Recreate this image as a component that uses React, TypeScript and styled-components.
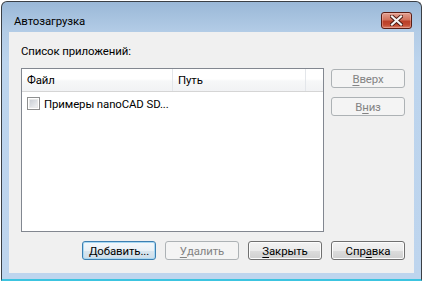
import React from 'react';
import styled, { createGlobalStyle } from 'styled-components';

const GlobalStyle = createGlobalStyle`
  html, body {
    margin: 0;
    padding: 0;
    background: #ffffff;
  }
  body {
    font-family: Roboto, "Noto Sans", sans-serif;
    font-size: 11.4px;
    letter-spacing: -0.1px;
    color: #000;
  }
`;

const Window = styled.div`
  box-sizing: border-box;
  width: 421px;
  height: 280px;
  margin: 1px 0 0 1px;
  border: 1px solid #3a3f45;
  border-bottom: 2px solid #3cc4e0;
  border-radius: 6px 6px 0 0;
  background: linear-gradient(to bottom, #9ab8d7 0px, #b3cce6 30px, #bcd4ed 60px, #bed5ee 100%);
  padding: 0 7px 6px 7px;
  display: flex;
  flex-direction: column;
`;

const TitleBar = styled.div`
  height: 30px;
  display: flex;
  align-items: flex-start;
  justify-content: space-between;
`;

const Title = styled.div`
  padding: 11px 0 0 5px;
  line-height: 16px;
  color: #000;
`;

const CloseButton = styled.div`
  box-sizing: border-box;
  width: 31px;
  height: 17px;
  margin: 10px 2px 0 0;
  border: 1px solid #5a1d14;
  border-radius: 3px;
  background: linear-gradient(to bottom, #e2a193 0%, #d2735d 45%, #bb3f28 55%, #c24a31 80%, #d9816a 100%);
  box-shadow: inset 0 0 0 1px rgba(255, 210, 200, 0.35);
  display: flex;
  align-items: center;
  justify-content: center;
`;

const Client = styled.div`
  flex: 1;
  background: #f0f0f0;
  padding: 11px 9px 13px 12px;
  display: flex;
  flex-direction: column;
`;

const Label = styled.div`
  line-height: 16px;
  height: 16px;
  margin-bottom: 9px;
`;

const MainRow = styled.div`
  display: flex;
  gap: 7px;
`;

const ListBox = styled.div`
  box-sizing: border-box;
  width: 303px;
  height: 164px;
  border: 1px solid #828790;
  background: #fff;
`;

const Header = styled.div`
  height: 22px;
  display: flex;
  border-bottom: 1px solid #d5d5d5;
  background: linear-gradient(to bottom, #ffffff 0%, #ffffff 45%, #f6f7f8 55%, #f1f2f4 100%);
`;

const HeaderCell = styled.div<{ $w?: number }>`
  box-sizing: border-box;
  ${(p) => (p.$w ? `width: ${p.$w}px;` : 'flex: 1;')}
  ${(p) => (p.$w ? 'border-right: 1px solid #e3e6ea;' : '')}
  padding-left: 5px;
  line-height: 22px;
  color: #000;
  white-space: nowrap;
`;

const Row = styled.div`
  height: 23px;
  display: flex;
  align-items: center;
  padding-left: 5px;
  gap: 4px;
`;

const Check = styled.div`
  box-sizing: border-box;
  width: 13px;
  height: 13px;
  border: 1px solid #8e8f8f;
  background: #fff;
  padding: 2px;
  &::after {
    content: '';
    display: block;
    width: 100%;
    height: 100%;
    background: linear-gradient(135deg, #cbcfd5 0%, #eef0f2 100%);
    outline: 1px solid #e8e8e8;
  }
`;

const CellText = styled.span`
  white-space: nowrap;
  line-height: 16px;
`;

const SideColumn = styled.div`
  display: flex;
  flex-direction: column;
  gap: 9px;
  padding-top: 1px;
`;

const Button = styled.div<{ $variant?: 'default' | 'disabled' | 'normal' }>`
  box-sizing: border-box;
  width: 74px;
  height: 19px;
  border-radius: 3px;
  display: flex;
  align-items: center;
  justify-content: center;
  line-height: 16px;
  white-space: nowrap;
  ${(p) =>
    p.$variant === 'disabled'
      ? `
    border: 1px solid #adb2b5;
    background: #f4f4f4;
    color: #838383;
  `
      : p.$variant === 'default'
      ? `
    border: 1px solid #3c7fb1;
    background: linear-gradient(to bottom, #f4f8fb 0%, #eaf1f6 50%, #d9e6ef 51%, #cddde9 100%);
    box-shadow: inset 0 0 0 1px #a8d8f3;
    color: #000;
  `
      : `
    border: 1px solid #707070;
    background: linear-gradient(to bottom, #f2f2f2 0%, #ebebeb 50%, #dddddd 51%, #cfcfcf 100%);
    box-shadow: inset 0 0 0 1px #fcfcfc;
    color: #000;
  `}
`;

const Key = styled.span`
  text-decoration: underline;
  text-underline-offset: 2px;
`;

const ButtonRow = styled.div`
  display: flex;
  justify-content: flex-end;
  gap: 9px;
  margin-top: 9px;
`;

const CloseGlyph = () => (
  <svg width="13" height="11" viewBox="0 0 13 11">
    <path
      d="M2 1.5 L11 9.5 M11 1.5 L2 9.5"
      stroke="#4a1810"
      strokeWidth="4"
      strokeLinecap="square"
    />
    <path
      d="M2 1.5 L11 9.5 M11 1.5 L2 9.5"
      stroke="#f4f4f4"
      strokeWidth="2.2"
      strokeLinecap="square"
    />
  </svg>
);

export default function App() {
  return (
    <>
      <GlobalStyle />
      <Window>
        <TitleBar>
          <Title>Автозагрузка</Title>
          <CloseButton>
            <CloseGlyph />
          </CloseButton>
        </TitleBar>
        <Client>
          <Label>Список приложений:</Label>
          <MainRow>
            <ListBox>
              <Header>
                <HeaderCell $w={151}>Файл</HeaderCell>
                <HeaderCell $w={133}>Путь</HeaderCell>
                <HeaderCell />
              </Header>
              <Row>
                <Check />
                <CellText>Примеры nanoCAD SD...</CellText>
              </Row>
            </ListBox>
            <SideColumn>
              <Button $variant="disabled">
                <Key>В</Key>верх
              </Button>
              <Button $variant="disabled">
                В<Key>н</Key>из
              </Button>
            </SideColumn>
          </MainRow>
          <ButtonRow>
            <Button $variant="default">Добавить...</Button>
            <Button $variant="disabled">
              <Key>У</Key>далить
            </Button>
            <Button $variant="normal">
              <Key>З</Key>акрыть
            </Button>
            <Button $variant="normal">
              Спр<Key>а</Key>вка
            </Button>
          </ButtonRow>
        </Client>
      </Window>
    </>
  );
}
